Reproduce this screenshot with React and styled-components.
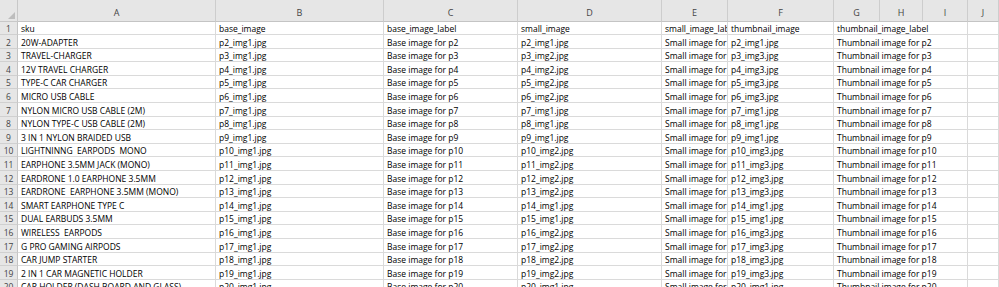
import React from "react";
import styled, { createGlobalStyle } from "styled-components";

const Global = createGlobalStyle`
  html, body { margin: 0; padding: 0; background: #fff; overflow: hidden; }
  body { font-family: "Open Sans", "Liberation Sans", sans-serif; }
`;

const COLS = "18px 198px 168px 134px 144px 66px 106px 46px 43px 45px 1fr";
const ROW_H = 13.6;

const Sheet = styled.div`
  display: grid;
  grid-template-columns: ${COLS};
  grid-template-rows: 21.5px;
  grid-auto-rows: ${ROW_H}px;
  width: 999px;
  height: 287px;
  overflow: hidden;
  font-family: "Open Sans", "Liberation Sans", sans-serif;
`;

const Corner = styled.div`
  position: relative;
  background: #e6e6e6;
  border-right: 1px solid #c8c8c8;
  border-bottom: 1px solid #c8c8c8;
  box-sizing: border-box;
  &::after {
    content: "";
    position: absolute;
    right: 2px;
    bottom: 2px;
    width: 0;
    height: 0;
    border-left: 7px solid transparent;
    border-bottom: 7px solid #bdbdbd;
  }
`;

const ColHead = styled.div`
  background: #e6e6e6;
  border-right: 1px solid #cdcdcd;
  border-bottom: 1px solid #c4c4c4;
  box-sizing: border-box;
  display: flex;
  align-items: flex-end;
  justify-content: center;
  padding-bottom: 2px;
  font-size: 9px;
  line-height: 12px;
  color: #444;
`;

const RowHead = styled.div`
  background: #e6e6e6;
  border-right: 1px solid #c4c4c4;
  border-bottom: 1px solid #d0d0d0;
  box-sizing: border-box;
  display: flex;
  align-items: flex-end;
  justify-content: center;
  font-size: 8.5px;
  line-height: 11px;
  color: #444;
`;

const Cell = styled.div`
  grid-column: span ${(p) => p.$span || 1};
  border-right: 1px solid #dadada;
  border-bottom: 1px solid #dadada;
  box-sizing: border-box;
  padding-left: 3px;
  white-space: pre;
  overflow: hidden;
  font-size: 8.5px;
  line-height: 11px;
  color: #000;
  display: flex;
  align-items: flex-end;
`;

const letters = ["A", "B", "C", "D", "E", "F", "G", "H", "I", "J"];

const skus = [
  "20W-ADAPTER",
  "TRAVEL-CHARGER",
  "12V TRAVEL CHARGER",
  "TYPE-C CAR CHARGER",
  "MICRO USB CABLE",
  "NYLON MICRO USB CABLE (2M)",
  "NYLON TYPE-C USB CABLE (2M)",
  "3 IN 1 NYLON BRAIDED USB",
  "LIGHTNINNG  EARPODS  MONO",
  "EARPHONE 3.5MM JACK (MONO)",
  "EARDRONE 1.0 EARPHONE 3.5MM",
  "EARDRONE  EARPHONE 3.5MM (MONO)",
  "SMART EARPHONE TYPE C",
  "DUAL EARBUDS 3.5MM",
  "WIRELESS  EARPODS",
  "G PRO GAMING AIRPODS",
  "CAR JUMP STARTER",
  "2 IN 1 CAR MAGNETIC HOLDER",
  "CAR HOLDER (DASH BOARD AND GLASS)",
];

// [small img index, thumbnail img index]
const imgs = [
  [1, 1], [2, 3], [2, 3], [2, 3], [2, 3], [1, 1], [1, 1], [1, 1], [2, 3],
  [2, 3], [2, 3], [2, 3], [1, 1], [1, 1], [2, 3], [2, 3], [2, 3], [2, 3], [1, 1],
];

const rows = [
  ["sku", "base_image", "base_image_label", "small_image", "small_image_label", "thumbnail_image", "thumbnail_image_label"],
  ...skus.map((s, i) => {
    const p = `p${i + 2}`;
    return [
      s,
      `${p}_img1.jpg`,
      `Base image for ${p}`,
      `${p}_img${imgs[i][0]}.jpg`,
      `Small image for ${p}`,
      `${p}_img${imgs[i][1]}.jpg`,
      `Thumbnail image for ${p}`,
    ];
  }),
];

export default function App() {
  return (
    <>
      <Global />
      <Sheet>
        <Corner />
        {letters.map((l) => (
          <ColHead key={l}>{l}</ColHead>
        ))}
        {rows.map((r, i) => (
          <React.Fragment key={i}>
            <RowHead>{i + 1}</RowHead>
            {r.slice(0, 6).map((v, j) => (
              <Cell key={j}>{v}</Cell>
            ))}
            <Cell $span={3}>{r[6]}</Cell>
            <Cell />
          </React.Fragment>
        ))}
      </Sheet>
    </>
  );
}
